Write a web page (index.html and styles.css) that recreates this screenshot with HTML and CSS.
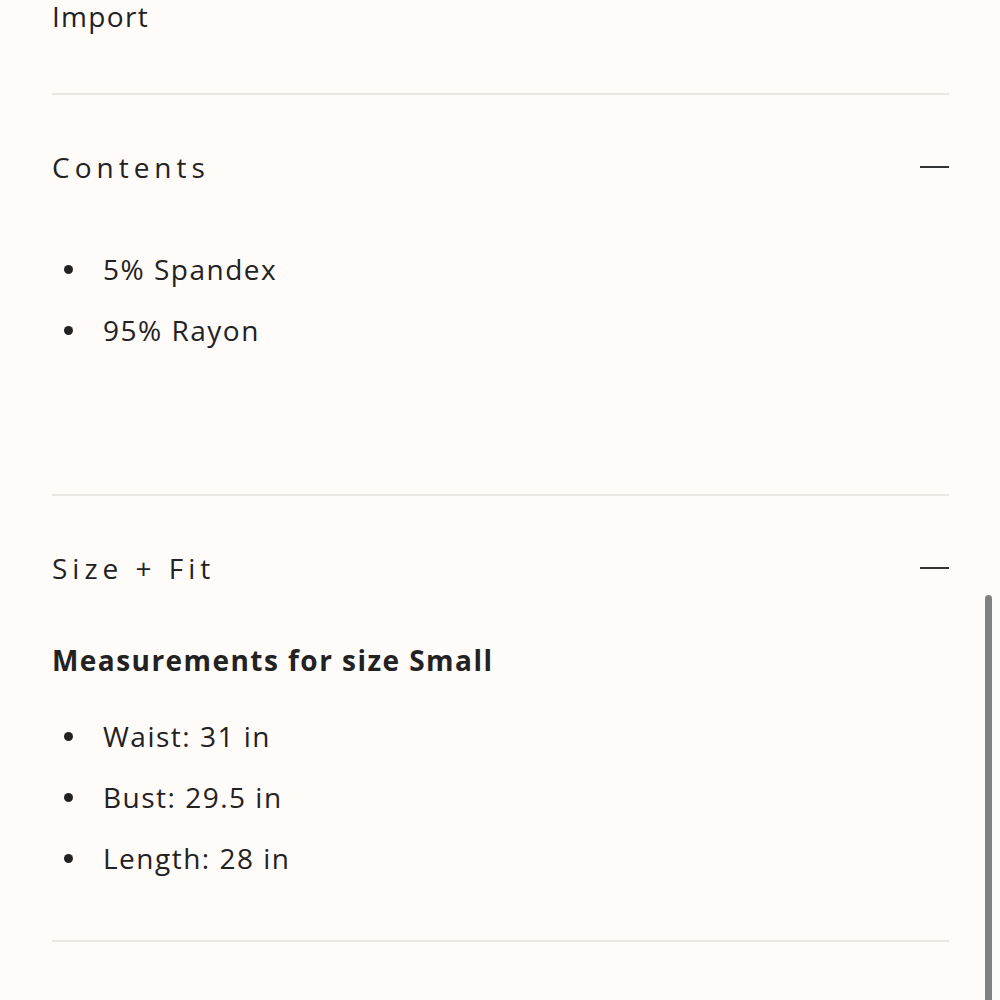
FILE: index.html
```html
<!DOCTYPE html>
<html>
<head>
<meta charset="utf-8">
<link rel="stylesheet" href="styles.css">
</head>
<body>
<div class="page">
  <p class="lead">Import</p>
  <section class="acc">
    <div class="acc-head">
      <h2 class="acc-title">Contents</h2>
      <span class="minus"></span>
    </div>
    <ul class="list list-first">
      <li>5% Spandex</li>
      <li>95% Rayon</li>
    </ul>
  </section>
  <section class="acc">
    <div class="acc-head">
      <h2 class="acc-title">Size + Fit</h2>
      <span class="minus"></span>
    </div>
    <p class="sub">Measurements for size Small</p>
    <ul class="list list-after-sub">
      <li>Waist: 31 in</li>
      <li>Bust: 29.5 in</li>
      <li>Length: 28 in</li>
    </ul>
  </section>
  <div class="end-rule"></div>
</div>
<div class="scrollbar"></div>
</body>
</html>
```
FILE: styles.css
```css
html, body {
  margin: 0;
  padding: 0;
  background: #fffbf9;
  height: 1000px;
  overflow: hidden;
}
body {
  font-family: "Open Sans", "Liberation Sans", sans-serif;
  color: #222;
  font-size: 28px;
  line-height: 40px;
}
.page {
  padding: 2px 51px 0 52px;
}
.lead {
  margin: 0 0 63px;
  line-height: 28px;
  letter-spacing: 1.3px;
}
.acc {
  border-top: 2px solid #ebe7e3;
  padding-top: 52px;
}
.acc-head {
  display: flex;
  justify-content: space-between;
  align-items: center;
}
.acc-title {
  margin: 0;
  font-size: 28px;
  font-weight: 400;
  letter-spacing: 5px;
}
.minus {
  width: 29px;
  height: 2px;
  background: #333;
}
.list {
  list-style: none;
  margin: 0;
  padding: 0;
  display: flex;
  flex-direction: column;
  gap: 21px;
  letter-spacing: 1.5px;
}
.list li {
  display: flex;
  align-items: center;
}
.list li::before {
  content: "";
  width: 9px;
  height: 9px;
  border-radius: 50%;
  background: #222;
  margin: 0 30px 0 12px;
  flex: none;
}
.list-first {
  margin-top: 62px;
  padding-bottom: 144px;
}
.sub {
  margin: 52px 0 36px;
  font-weight: 700;
  letter-spacing: 1.45px;
}
.list-after-sub {
  padding-bottom: 62px;
}
.end-rule {
  border-top: 2px solid #ebe7e3;
}
.scrollbar {
  position: fixed;
  right: 8px;
  top: 595px;
  bottom: -10px;
  width: 7px;
  border-radius: 4px;
  background: #808080;
}
```
